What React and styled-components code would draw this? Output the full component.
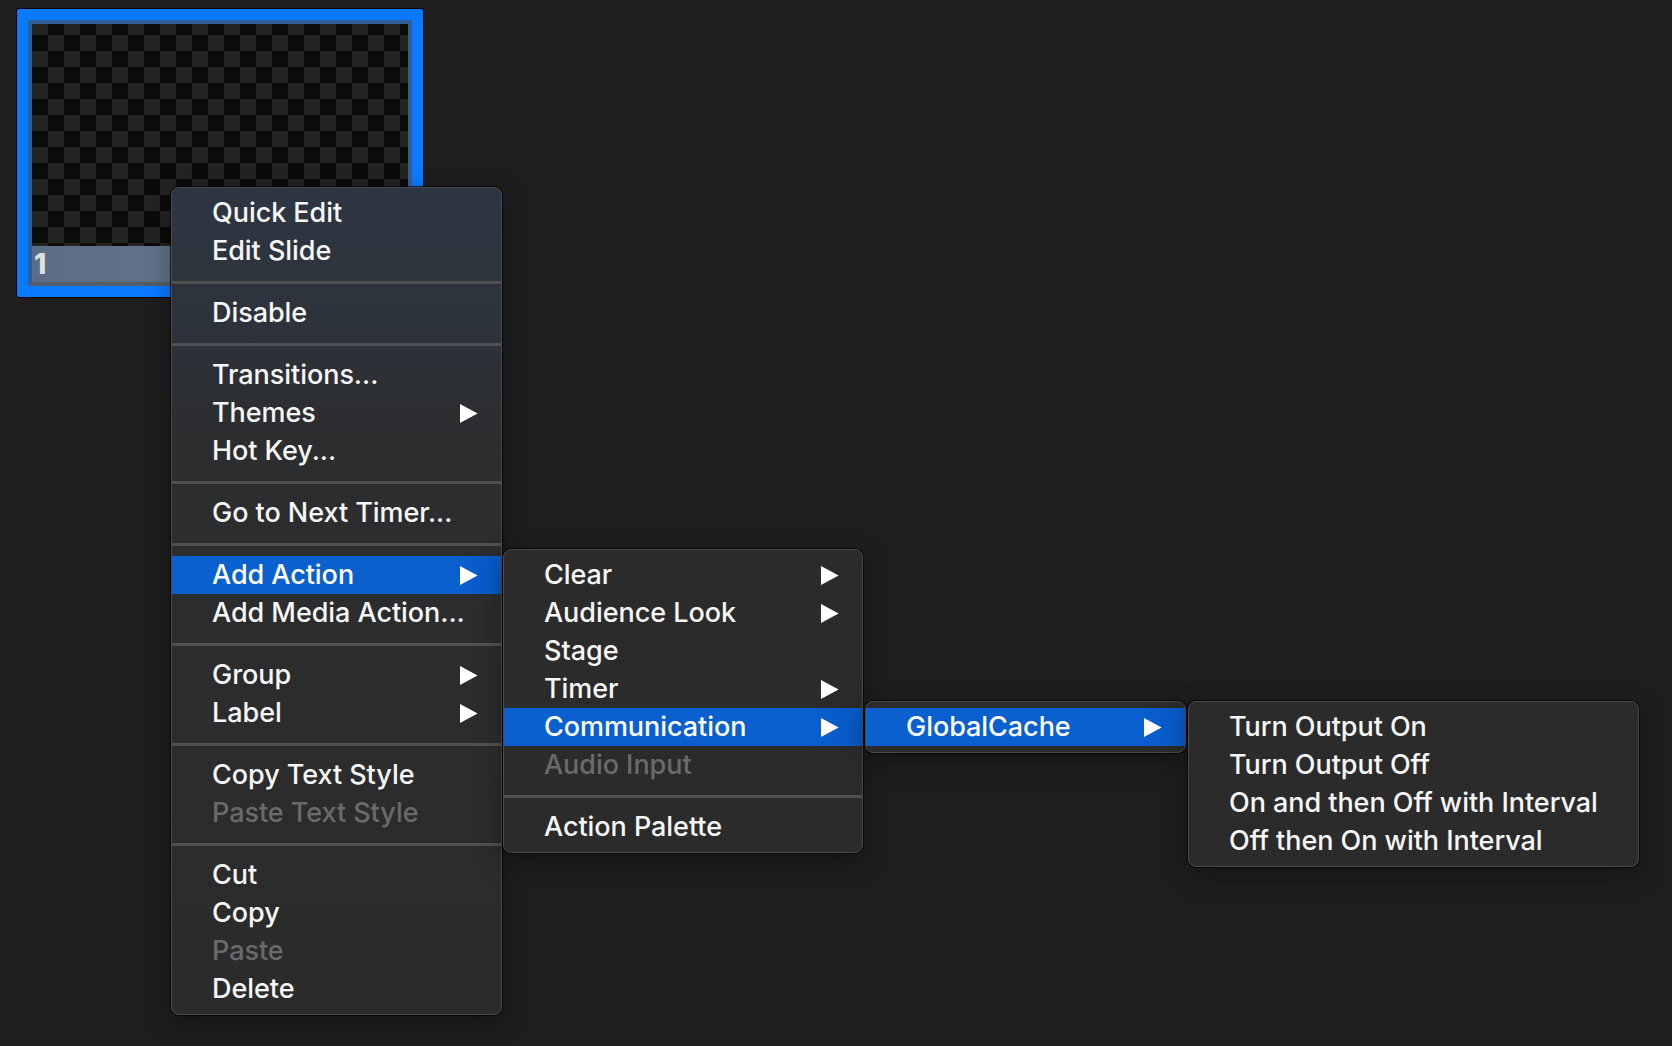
import React from 'react'
import styled, { createGlobalStyle, css } from 'styled-components'

const GlobalStyle = createGlobalStyle`
  html, body {
    margin: 0;
    padding: 0;
    background: #1e1e1e;
  }
  body {
    font-family: Inter, "Noto Sans", "Liberation Sans", sans-serif;
    -webkit-font-smoothing: antialiased;
  }
`

const Canvas = styled.div`
  position: relative;
  width: 1672px;
  height: 1046px;
  overflow: hidden;
  padding: 8px 0 0 16px;
  box-sizing: border-box;
`

const Thumb = styled.div`
  width: 408px;
  height: 290px;
  box-sizing: border-box;
  border: 1px solid #000;
  border-radius: 3px;
  background: #0a7aff;
  padding: 11px;
  display: flex;
`

const ThumbInner = styled.div`
  flex: 1;
  border: 4px solid #2f5f98;
  border-bottom-color: #545d69;
  display: flex;
  flex-direction: column;
`

const Checker = styled.div`
  flex: 1;
  background-color: #0b0b0b;
  background-image:
    linear-gradient(45deg, #232323 25%, transparent 25%, transparent 75%, #232323 75%),
    linear-gradient(45deg, #232323 25%, transparent 25%, transparent 75%, #232323 75%);
  background-size: 32px 32px;
  background-position: 16px -5px, 0 11px;
`

const ThumbLabel = styled.div`
  height: 36px;
  background: linear-gradient(90deg, #5b6d86 0%, #66758a 60%, #6d7a8b 100%);
  color: #dedfe1;
  font-weight: 800;
  font-size: 28px;
  line-height: 36px;
  padding-left: 2px;
`

const Menu = styled.div`
  position: absolute;
  left: ${p => p.$left}px;
  top: ${p => p.$top}px;
  width: ${p => p.$width}px;
  box-sizing: border-box;
  padding: 6px 0;
  border: 1px solid #4a4c50;
  border-radius: 8px;
  box-shadow: 0 0 0 1px rgba(0, 0, 0, 0.7), 0 8px 24px rgba(0, 0, 0, 0.35);
  background: ${p => p.$tinted
    ? 'linear-gradient(180deg, #2c3642 0%, #2d333b 16%, #2c2d2f 30%, #2b2b2b 100%)'
    : '#2b2b2b'};
  overflow: hidden;
`

const Row = styled.div`
  height: 38px;
  display: flex;
  align-items: center;
  justify-content: space-between;
  padding: 0 23px 2px 40px;
  box-sizing: border-box;
  font-size: 27px;
  font-weight: 500;
  letter-spacing: -0.05px;
  color: ${p => (p.$disabled ? '#6a6a6a' : '#f6f6f6')};
  white-space: nowrap;
  ${p => p.$active && css`
    background: linear-gradient(90deg, #0a60cf 0%, #0a60cf 85%, #0759c6 100%);
    color: #fff;
  `}
  svg {
    margin-top: 2px;
  }
`

const Separator = styled.div`
  height: 3px;
  margin: 11px 0 10px;
  background: #4f5052;
`

const Arrow = () => (
  <svg width="18" height="19" viewBox="0 0 18 19">
    <polygon points="0,0 17.6,9.5 0,19" fill="#fff" />
  </svg>
)

const mainItems = [
  ['Quick Edit'], ['Edit Slide'], '-',
  ['Disable'], '-',
  ['Transitions...'], ['Themes', 'sub'], ['Hot Key...'], '-',
  ['Go to Next Timer...'], '-',
  ['Add Action', 'sub', 'active'], ['Add Media Action...'], '-',
  ['Group', 'sub'], ['Label', 'sub'], '-',
  ['Copy Text Style'], ['Paste Text Style', null, 'disabled'], '-',
  ['Cut'], ['Copy'], ['Paste', null, 'disabled'], ['Delete'],
]

const actionItems = [
  ['Clear', 'sub'], ['Audience Look', 'sub'], ['Stage'], ['Timer', 'sub'],
  ['Communication', 'sub', 'active'], ['Audio Input', null, 'disabled'], '-',
  ['Action Palette'],
]

const commItems = [['GlobalCache', 'sub', 'active']]

const cacheItems = [
  ['Turn Output On'], ['Turn Output Off'],
  ['On and then Off with Interval'], ['Off then On with Interval'],
]

function MenuList({ items, ...rest }) {
  return (
    <Menu {...rest}>
      {items.map((it, i) =>
        it === '-' ? (
          <Separator key={i} />
        ) : (
          <Row key={i} $active={it[2] === 'active'} $disabled={it[2] === 'disabled'}>
            <span>{it[0]}</span>
            {it[1] === 'sub' && <Arrow />}
          </Row>
        )
      )}
    </Menu>
  )
}

export default function App() {
  return (
    <>
      <GlobalStyle />
      <Canvas>
        <Thumb>
          <ThumbInner>
            <Checker />
            <ThumbLabel>1</ThumbLabel>
          </ThumbInner>
        </Thumb>
        <MenuList items={mainItems} $left={171} $top={187} $width={331} $tinted />
        <MenuList items={actionItems} $left={503} $top={549} $width={360} />
        <MenuList items={commItems} $left={865} $top={701} $width={321} />
        <MenuList items={cacheItems} $left={1188} $top={701} $width={451} />
      </Canvas>
    </>
  )
}
